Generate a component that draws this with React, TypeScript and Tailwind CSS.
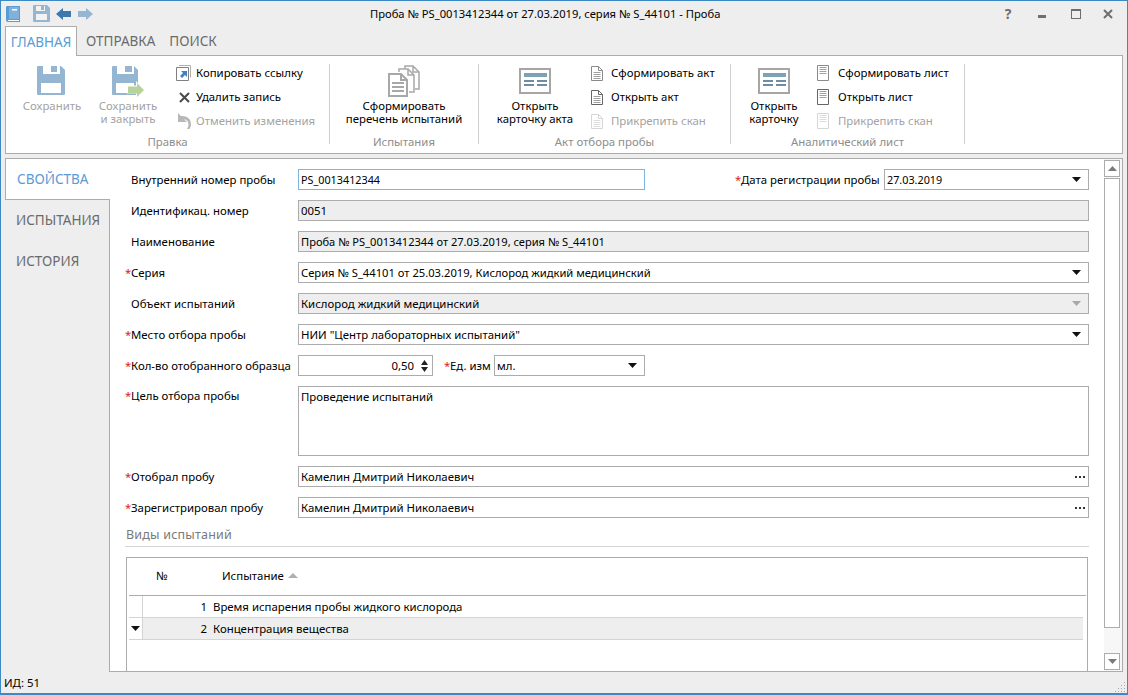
import type { ReactNode } from "react";

const FONT = "font-['Noto_Sans','Liberation_Sans',sans-serif]";

function Floppy({ arrow }: { arrow?: boolean }) {
  if (arrow) {
    return (
      <svg width="32" height="32" viewBox="0 0 32 32" className="block">
        <path d="M1 1h21l4 4v24a1 1 0 0 1-1 1H1a1 1 0 0 1-1-1V2a1 1 0 0 1 1-1z" fill="#94b6d3" />
        <path d="M5 1h17v8H5z" fill="#fff" />
        <path d="M13 1h7v6h-7z" fill="#94b6d3" />
        <path d="M4 18h18v10H4z" fill="#fff" />
        <path d="M15 20.500h9V16l8 9-8 8v-4.500h-9z" fill="#fff" />
        <path d="M16 21.500h9V18l7 7-7 7v-3.500h-9z" fill="#b7d39b" />
      </svg>
    );
  }
  return (
    <svg width="32" height="32" viewBox="0 0 32 32" className="block">
      <path d="M2 1h23l4 4v24a1 1 0 0 1-1 1H2a1 1 0 0 1-1-1V2a1 1 0 0 1 1-1z" fill="#94b6d3" />
      <path d="M7 1h17v8H7z" fill="#fff" />
      <path d="M15 1h6v6h-6z" fill="#94b6d3" />
      <path d="M5 18h20v10H5z" fill="#fff" />
    </svg>
  );
}

function Pages() {
  return (
    <svg width="32" height="32" viewBox="0 0 32 32" fill="none" stroke="#a8a8a8" strokeWidth="1.500" className="block">
      <path d="M17 4V1h8l6 6v17h-4" />
      <path d="M25 1v6h6" />
      <path d="M11 7V4h9l6 6v17h-5" fill="#fff" />
      <path d="M20 4v6h6" />
      <path d="M1 9h12l6 6v16H1z" fill="#fff" strokeWidth="2" />
      <path d="M13 9v6h6" strokeWidth="2" />
      <path d="M4 18h12M4 22h12M4 26h12" strokeWidth="2" />
    </svg>
  );
}

function Card() {
  return (
    <svg width="32" height="26" viewBox="0 0 32 26" className="block">
      <path d="M1 1h30v24H1z" fill="#fff" stroke="#a6a6a6" strokeWidth="2" />
      <path d="M5 5h23v4H5z" fill="#7ba3b5" />
      <path d="M5 12h10v2H5zM18 12h10v2H18zM5 16h10v2H5zM18 16h10v2H18z" fill="#6f8da0" />
    </svg>
  );
}

function DocFolded({ dim, dark }: { dim?: boolean; dark?: boolean }) {
  const c = dim ? "#d6d6d6" : dark ? "#666666" : "#8a8a8a";
  return (
    <svg width="12" height="15" viewBox="0 0 12 15" fill="none" stroke={c} className="block">
      <path d="M.5.500h7l4 4v10H.5z" />
      <path d="M7.500.500v4h4" />
      <path d="M2.500 6.500h7M2.500 8.500h7M2.500 10.500h7M2.500 12.500h7" stroke={dim ? "#dddddd" : "#a0a0a0"} />
    </svg>
  );
}

function DocPlain({ dim, dark }: { dim?: boolean; dark?: boolean }) {
  const c = dim ? "#d6d6d6" : dark ? "#666666" : "#8a8a8a";
  return (
    <svg width="12" height="16" viewBox="0 0 12 16" fill="none" stroke={c} className="block">
      <path d="M.5.500h11v15H.5z" />
      <path d="M2.500 2.500h7M2.500 4.500h7M2.500 6.500h7M2.500 8.500h7" stroke={dim ? "#dddddd" : "#a0a0a0"} />
    </svg>
  );
}

function LinkIcon() {
  return (
    <svg width="15" height="16" viewBox="0 0 15 16" fill="none" className="block">
      <path d="M3 .5h11.500v12" stroke="#b0b0b0" />
      <path d="M.5 2.500h12v13H.5z" stroke="#808080" fill="#fff" />
      <path d="M5 6h6v6l-2-2-3 3-2-2 3-3z" fill="#3f82c4" />
    </svg>
  );
}

function CrossIcon() {
  return (
    <svg width="11" height="11" viewBox="0 0 11 11" stroke="#4a4a4a" strokeWidth="2" className="ml-[3px] block">
      <path d="M1 1l9 9M10 1l-9 9" />
    </svg>
  );
}

function UndoIcon() {
  return (
    <svg width="13" height="16" viewBox="0 0 13 16" className="ml-[2px] block">
      <path d="M0 0v9h9L6 6.500C9 6.500 10.500 9 10.500 11.500 10.500 13 10 14.500 9 16h2.500C12.500 14.500 13 13 13 11 13 6 9.500 3 4 3H3z" fill="#b8b8b8" />
    </svg>
  );
}

function Caret({ dim }: { dim?: boolean }) {
  return (
    <svg width="9" height="5" viewBox="0 0 9 5" className="block">
      <path d="M0 0h9L4.500 5z" fill={dim ? "#a8a8a8" : "#111"} />
    </svg>
  );
}

function Dots() {
  return (
    <svg width="10" height="2" viewBox="0 0 10 2" className="mr-[1px] block">
      <path d="M0 0h2v2H0zM4 0h2v2H4zM8 0h2v2H8z" fill="#333" />
    </svg>
  );
}

function SmallAction({ icon, label, dim, iconBox }: { icon: ReactNode; label: string; dim?: boolean; iconBox: string }) {
  return (
    <div className="flex h-6 items-center">
      <div className={`flex items-center justify-start ${iconBox}`}>{icon}</div>
      <span className={dim ? "text-[#a3a3a3]" : "text-black"}>{label}</span>
    </div>
  );
}

function BigAction({ icon, lines, dim, width }: { icon: ReactNode; lines: string[]; dim?: boolean; width: string }) {
  return (
    <div className={`flex flex-col items-center ${width}`}>
      <div className="flex h-[32px] items-center justify-center">{icon}</div>
      <div className={`mt-[2px] text-center leading-[13px] ${dim ? "text-[#a3a3a3]" : "text-black"}`}>
        {lines.map((l) => (
          <div key={l}>{l}</div>
        ))}
      </div>
    </div>
  );
}

function Group({ label, width, children }: { label: string; width: string; children: ReactNode }) {
  return (
    <div className={`flex h-full flex-col ${width}`}>
      <div className="flex h-[79px] pt-[9px]">{children}</div>
      <div className="text-center leading-[14px] text-[#8d8d8d]">{label}</div>
    </div>
  );
}

function Divider() {
  return <div className="mt-[8px] h-[80px] w-px shrink-0 bg-[#cfcfcf]" />;
}

function Label({ text, required, width = "w-[173px]" }: { text: string; required?: boolean; width?: string }) {
  return (
    <div className={`flex shrink-0 ${width}`}>
      <span className="w-[6px] text-[#e02020]">{required ? "*" : ""}</span>
      <span className="whitespace-nowrap text-black">{text}</span>
    </div>
  );
}

function Field({
  value,
  kind,
  width = "flex-1",
  size = "",
}: {
  value: string;
  kind?: "gray" | "combo" | "grayCombo" | "dots" | "focus";
  width?: string;
  size?: string;
}) {
  const gray = kind === "gray" || kind === "grayCombo";
  return (
    <div
      className={`flex h-[21px] items-center border px-[2px] ${width} ${gray ? "bg-[#eeeeee]" : "bg-white"} ${
        kind === "focus" ? "border-[#7db4e0]" : "border-[#acacac]"
      }`}
    >
      <span className={`flex-1 truncate text-black ${size}`}>{value}</span>
      {(kind === "combo" || kind === "grayCombo") && (
        <div className="mr-[5px]">
          <Caret dim={kind === "grayCombo"} />
        </div>
      )}
      {kind === "dots" && <Dots />}
    </div>
  );
}

function Row({ label, required, children }: { label: string; required?: boolean; children: ReactNode }) {
  return (
    <div className="flex h-[21px] items-center">
      <Label text={label} required={required} />
      {children}
    </div>
  );
}

function SideTab({ text, active }: { text: string; active?: boolean }) {
  return (
    <div
      className={
        active
          ? "relative z-10 -mr-px flex h-[41px] items-center border-b border-l border-[#acacac] bg-white pl-[11px] text-[13.5px] text-[#5a9bd5]"
          : "flex h-[41px] items-center pb-[2px] pl-[11px] text-[13.5px] text-[#6a6a6a]"
      }
    >
      {text}
    </div>
  );
}

function ScrollBtn({ up }: { up?: boolean }) {
  return (
    <div className="flex h-[17px] items-center justify-center border border-[#acacac] bg-white">
      <svg width="9" height="5" viewBox="0 0 9 5">
        <path d={up ? "M0 5h9L4.500 0z" : "M0 0h9L4.500 5z"} fill="#7a7a7a" />
      </svg>
    </div>
  );
}

export default function App() {
  return (
    <div className={`flex h-[695px] w-[1128px] flex-col overflow-hidden border-x border-t border-b-2 border-[#3b8ac6] bg-[#eeeeee] text-[11.4px] leading-[16px] ${FONT}`}>
      {/* title bar */}
      <div className="flex h-[25px] shrink-0 items-center">
        <div className="flex w-[369px] shrink-0 items-center pl-[5px]">
          <svg width="14" height="16" viewBox="0 0 14 16" className="block">
            <path d="M1 0h13v16H2a2 2 0 0 1-2-2V1a1 1 0 0 1 1-1z" fill="#5a9bd2" />
            <path d="M3 1h10v12H3z" fill="#7fb1dc" />
            <path d="M6 3h5v1.500H6z" fill="#fff" />
            <path d="M2 14h11v1H2z" fill="#fff" />
          </svg>
          <svg width="17" height="17" viewBox="0 0 17 17" className="ml-[13px] block">
            <path d="M1 0h13l3 3v13a1 1 0 0 1-1 1H1a1 1 0 0 1-1-1V1a1 1 0 0 1 1-1z" fill="#94b6d3" />
            <path d="M3 1h9v5H3z" fill="#f2f2f2" />
            <path d="M8 1h3v4H8z" fill="#94b6d3" />
            <path d="M3 9h11v6H3z" fill="#f2f2f2" />
          </svg>
          <svg width="15" height="12" viewBox="0 0 15 12" className="ml-[6px] block">
            <path d="M0 6l7-6v3h8v6H7v3z" fill="#3d78ad" />
          </svg>
          <svg width="15" height="12" viewBox="0 0 15 12" className="ml-[7px] block">
            <path d="M15 6L8 0v3H0v6h8v3z" fill="#94b6d3" />
          </svg>
        </div>
        <span className="text-[11.2px] text-black">Проба № PS_0013412344 от 27.03.2019, серия № S_44101 - Проба</span>
        <div className="ml-auto flex items-center pr-[4px] text-[#6e6e6e]">
          <span className="w-[34px] text-center text-[14px] font-bold leading-none">?</span>
          <div className="flex w-[34px] justify-center pt-[6px]">
            <div className="h-[3px] w-[8px] bg-[#6e6e6e]" />
          </div>
          <div className="flex w-[34px] justify-center">
            <div className="h-[10px] w-[10px] border border-t-2 border-[#6e6e6e]" />
          </div>
          <div className="flex w-[30px] justify-center">
            <svg width="10" height="10" viewBox="0 0 10 10" stroke="#6e6e6e" strokeWidth="2">
              <path d="M1 1l8 8M9 1L1 9" />
            </svg>
          </div>
        </div>
      </div>

      {/* ribbon tabs */}
      <div className="flex h-[29px] shrink-0 items-start px-[4px] text-[13.5px] leading-[20px]">
        <div className="relative z-10 flex h-[30px] w-[72px] items-center justify-center border-x border-t border-[#acacac] bg-white text-[#5a9bd5]">ГЛАВНАЯ</div>
        <div className="flex h-[30px] items-center px-[9px] text-[#6a6a6a]">ОТПРАВКА</div>
        <div className="flex h-[30px] items-center pl-[5px] text-[#6a6a6a]">ПОИСК</div>
      </div>

      {/* ribbon */}
      <div className="mx-[4px] flex h-[99px] shrink-0 border border-[#acacac] bg-white">
        <Group label="Правка" width="w-[323px]">
          <BigAction icon={<Floppy />} lines={["Сохранить"]} dim width="w-[92px]" />
          <BigAction icon={<Floppy arrow />} lines={["Сохранить", "и закрыть"]} dim width="w-[60px]" />
          <div className="ml-[18px] -mt-[4px] flex flex-col">
            <SmallAction icon={<LinkIcon />} label="Копировать ссылку" iconBox="w-[20px]" />
            <SmallAction icon={<CrossIcon />} label="Удалить запись" iconBox="w-[20px]" />
            <SmallAction icon={<UndoIcon />} label="Отменить изменения" dim iconBox="w-[20px]" />
          </div>
        </Group>
        <Divider />
        <Group label="Испытания" width="w-[148px]">
          <BigAction icon={<Pages />} lines={["Сформировать", "перечень испытаний"]} width="w-[148px]" />
        </Group>
        <Divider />
        <Group label="Акт отбора пробы" width="w-[251px]">
          <BigAction icon={<Card />} lines={["Открыть", "карточку акта"]} width="w-[112px]" />
          <div className="-mt-[4px] flex flex-col">
            <SmallAction icon={<DocFolded />} label="Сформировать акт" iconBox="w-[20px]" />
            <SmallAction icon={<DocFolded dark />} label="Открыть акт" iconBox="w-[20px]" />
            <SmallAction icon={<DocFolded dim />} label="Прикрепить скан" dim iconBox="w-[20px]" />
          </div>
        </Group>
        <Divider />
        <Group label="Аналитический лист" width="w-[233px]">
          <BigAction icon={<Card />} lines={["Открыть", "карточку"]} width="w-[86px]" />
          <div className="-mt-[4px] flex flex-col">
            <SmallAction icon={<DocPlain />} label="Сформировать лист" iconBox="w-[21px]" />
            <SmallAction icon={<DocPlain dark />} label="Открыть лист" iconBox="w-[21px]" />
            <SmallAction icon={<DocPlain dim />} label="Прикрепить скан" dim iconBox="w-[21px]" />
          </div>
        </Group>
        <Divider />
      </div>

      {/* body */}
      <div className="mx-[4px] mt-[4px] flex min-h-0 flex-1 border-t border-r border-[#acacac]">
        <div className="w-[104px] shrink-0">
          <SideTab text="СВОЙСТВА" active />
          <SideTab text="ИСПЫТАНИЯ" />
          <SideTab text="ИСТОРИЯ" />
        </div>
        <div className="flex min-w-0 flex-1 border-b border-l border-[#acacac] bg-white">
          <div className="flex min-w-0 flex-1 flex-col overflow-hidden pt-[10px] pl-[15px] pr-[15px]">
            <div className="flex flex-col gap-[10px]">
              <Row label="Внутренний номер пробы">
                <Field value="PS_0013412344" kind="focus" width="w-[347px]" size="text-[10.8px]" />
                <div className="ml-[90px] flex items-center">
                  <Label text="Дата регистрации пробы" required width="w-[149px]" />
                  <Field value="27.03.2019" kind="combo" width="w-[205px]" size="text-[10.8px]" />
                </div>
              </Row>
              <Row label="Идентификац. номер">
                <Field value="0051" kind="gray" />
              </Row>
              <Row label="Наименование">
                <Field value="Проба № PS_0013412344 от 27.03.2019, серия № S_44101" kind="gray" size="text-[11.1px]" />
              </Row>
              <Row label="Серия" required>
                <Field value="Серия № S_44101 от 25.03.2019, Кислород жидкий медицинский" kind="combo" size="text-[11.2px]" />
              </Row>
              <Row label="Объект испытаний">
                <Field value="Кислород жидкий медицинский" kind="grayCombo" />
              </Row>
              <Row label="Место отбора пробы" required>
                <Field value="НИИ &quot;Центр лабораторных испытаний&quot;" kind="combo" />
              </Row>
              <Row label="Кол-во отобранного образца" required>
                <div className="flex h-[21px] w-[135px] items-center justify-end border border-[#acacac] bg-white pr-[4px]">
                  <span className="text-black">0,50</span>
                  <div className="ml-[7px] flex flex-col gap-[2px]">
                    <svg width="7" height="5" viewBox="0 0 7 5" className="block"><path d="M0 5h7L3.500 0z" fill="#222" /></svg>
                    <svg width="7" height="5" viewBox="0 0 7 5" className="block"><path d="M0 0h7L3.500 5z" fill="#222" /></svg>
                  </div>
                </div>
                <div className="ml-[11px] flex items-center">
                  <Label text="Ед. изм" required width="w-[50px]" />
                  <Field value="мл." kind="combo" width="w-[151px]" />
                </div>
              </Row>
              <div className="flex h-[70px]">
                <div className="pt-[2px]">
                  <Label text="Цель отбора пробы" required />
                </div>
                <div className="flex-1 border border-[#acacac] bg-white px-[2px] pt-[2px] text-black">Проведение испытаний</div>
              </div>
              <Row label="Отобрал пробу" required>
                <Field value="Камелин Дмитрий Николаевич" kind="dots" />
              </Row>
              <Row label="Зарегистрировал пробу" required>
                <Field value="Камелин Дмитрий Николаевич" kind="dots" />
              </Row>
            </div>

            <div className="mt-[8px] flex h-[21px] items-center border-b border-[#d4d4d4] pb-[3px] pl-[1px] text-[12.500px] tracking-[0.2px] text-[#7a7a7a]">
              Виды испытаний
            </div>

            <div className="mt-[10px] ml-[1px] mr-[1px] flex min-h-0 flex-1 flex-col border-x border-t border-[#acacac] pl-[2px] pr-[1px]">
              <div className="flex h-[38px] shrink-0 items-center border-b border-[#acacac] pb-[2px] text-black">
                <span className="ml-[27px] w-[66px]">№</span>
                <span>Испытание</span>
                <svg width="10" height="5" viewBox="0 0 10 5" className="ml-[4px]">
                  <path d="M0 5h10L5 0z" fill="#b0b0b0" />
                </svg>
              </div>
              <div className="mr-[3px] flex h-[22px] shrink-0 items-center border-b border-[#d4d4d4] text-black">
                <div className="h-full w-[14px] shrink-0 border-r border-[#d4d4d4]" />
                <span className="w-[64px] text-right">1</span>
                <span className="ml-[6px]">Время испарения пробы жидкого кислорода</span>
              </div>
              <div className="mr-[3px] flex h-[22px] shrink-0 items-center border-b border-[#d4d4d4] bg-[#eeeeee] text-black">
                <div className="flex h-full w-[14px] shrink-0 items-center justify-center border-r border-[#d4d4d4] bg-white">
                  <Caret />
                </div>
                <span className="w-[64px] text-right">2</span>
                <span className="ml-[6px]">Концентрация вещества</span>
              </div>
            </div>
          </div>

          {/* scrollbar */}
          <div className="flex w-[18px] shrink-0 flex-col bg-[#f7f7f7] pt-[1px] pr-[2px] pb-[1px]">
            <ScrollBtn up />
            <div className="mt-[1px] h-[450px] border border-[#acacac] bg-white" />
            <div className="flex-1" />
            <ScrollBtn />
          </div>
        </div>
      </div>

      {/* status bar */}
      <div className="flex h-[21px] shrink-0 items-center justify-between pl-[3px] text-black">
        <span>ИД: 51</span>
        <svg width="11" height="11" viewBox="0 0 11 11" className="mt-[9px] mr-[1px]">
          <path d="M9 0h1v1H9zM9 3h1v1H9zM6 3h1v1H6zM9 6h1v1H9zM6 6h1v1H6zM3 6h1v1H3zM9 9h1v1H9zM6 9h1v1H6zM3 9h1v1H3zM0 9h1v1H0z" fill="#a8a8a8" />
        </svg>
      </div>
    </div>
  );
}
